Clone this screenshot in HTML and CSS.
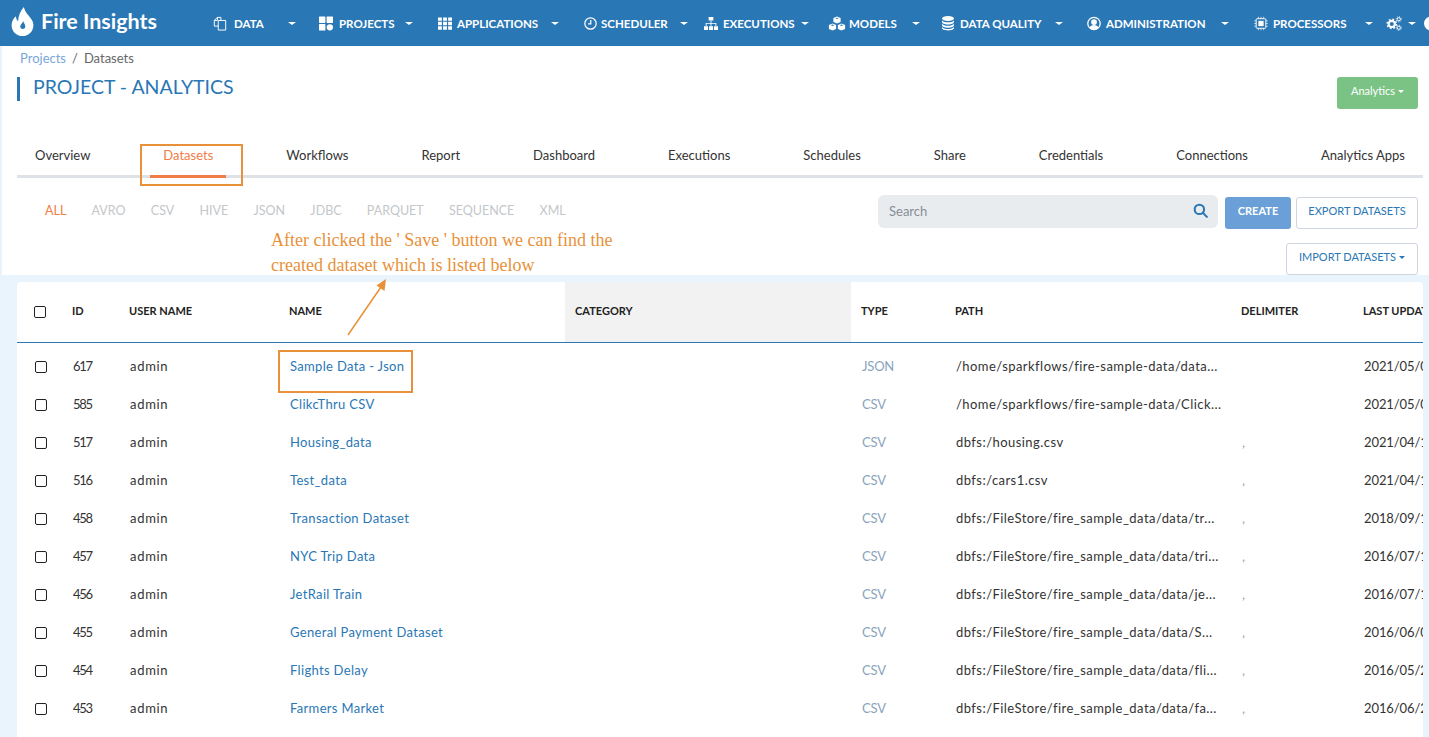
FILE: index.html
```html
<!DOCTYPE html>
<html lang="en">
<head>
    <meta charset="UTF-8">
    <meta name="viewport" content="width=device-width, initial-scale=1.0">
    <title>Fire Insights - Datasets</title>
    <link rel="stylesheet" href="styles.css">
</head>
<body>

<header class="navbar">
    <a class="brand" href="#">
        <svg class="brand-icon" viewBox="0 0 24 32"><path fill-rule="evenodd" d="M13.500 0c1 4.500 3 6.800 5.600 10C21.800 13.200 24 16 24 20c0 6.800-5.300 12-12 12S0 26.800 0 20c0-4 1.800-7.200 4.800-9.800 0 2.400.7 4.200 2.400 5.400C7.300 9.800 9.800 4.200 13.500 0zM12.800 15.500c-.4 1.600-1.400 2.500-2.200 3.500-.7.8-1.100 1.700-1.100 2.600 0 1.600 1.200 2.800 2.800 2.800s2.800-1.200 2.800-2.800c0-2.400-1.700-3.600-2.300-6.100z"/></svg>
        <span>Fire Insights</span>
    </a>
    <nav class="nav-items">
        <a class="nav-item" href="#">
            <svg class="nav-icon" viewBox="0 0 16 16"><g fill="none" stroke="#fff" stroke-width="1.100"><path d="M6 4.500h8.500v11H6z"/><path d="M6 11H1.500V4.500L5 1h4v3.500"/><path d="M5 1v3.500H1.500"/></g></svg>
            <span>DATA</span><i class="caret"></i>
        </a>
        <a class="nav-item" href="#">
            <svg class="nav-icon" viewBox="0 0 16 16"><rect x="0" y="0" width="7.300" height="7.300" rx=".6"/><rect x="8.700" y="0" width="7.300" height="7.300" rx=".6"/><rect x="0" y="8.700" width="7.300" height="7.300" rx=".6"/><circle cx="12.400" cy="12.400" r="3.600"/></svg>
            <span>PROJECTS</span><i class="caret"></i>
        </a>
        <a class="nav-item" href="#">
            <svg class="nav-icon" viewBox="0 0 16 16"><path d="M0 1h4.400v3.900H0zM5.800 1h4.400v3.900H5.800zM11.600 1H16v3.900h-4.400zM0 6.100h4.400V10H0zM5.800 6.100h4.400V10H5.800zM11.600 6.100H16V10h-4.400zM0 11.200h4.400v3.900H0zM5.800 11.200h4.400v3.900H5.800zM11.600 11.200H16v3.900h-4.400z"/></svg>
            <span>APPLICATIONS</span><i class="caret"></i>
        </a>
        <a class="nav-item" href="#">
            <svg class="nav-icon" viewBox="0 0 16 16"><g fill="none" stroke="#fff" stroke-width="1.500"><circle cx="8" cy="8" r="7"/><path d="M8.300 3.800v4.600H5"/></g></svg>
            <span>SCHEDULER</span><i class="caret"></i>
        </a>
        <a class="nav-item" href="#">
            <svg class="nav-icon" viewBox="0 0 16 16"><path d="M5.300 .5h5.400v4H5.300zM0 11h4.600v4.500H0zM5.700 11h4.600v4.500H5.700zM11.400 11H16v4.500h-4.600z"/><path d="M7.500 4.500h1v2.800h5.600V11h-1V8.300H8.500V11h-1V8.300H2.900V11h-1V7.300h5.600z"/></svg>
            <span>EXECUTIONS</span><i class="caret"></i>
        </a>
        <a class="nav-item" href="#">
            <svg class="nav-icon nav-icon-wide" viewBox="0 0 20 16"><path d="M10 .3l4 1.700v4.300L10 8 6 6.300V2zM10 1.500L8 2.300l2 .8 2-.8z"/><path d="M5 8l4 1.700V14l-4 1.700L1 14V9.700zM5 9.200l-2 .8 2 .8 2-.8z"/><path d="M15 8l4 1.700V14l-4 1.700-4-1.700V9.700zM15 9.200l-2 .8 2 .8 2-.8z"/></svg>
            <span>MODELS</span><i class="caret"></i>
        </a>
        <a class="nav-item" href="#">
            <svg class="nav-icon" viewBox="0 0 16 17"><ellipse cx="8" cy="2.800" rx="6.800" ry="2.800"/><path d="M1.200 5c1 1.500 3.800 2.200 6.800 2.200s5.800-.7 6.800-2.200v1.800C14.800 8.400 11.800 9.600 8 9.600S1.200 8.400 1.200 6.800z"/><path d="M1.200 8.700C2.200 10.200 5 11 8 11s5.800-.8 6.800-2.300v1.900c0 1.600-3 2.800-6.800 2.800s-6.800-1.200-6.800-2.800z"/><path d="M1.200 12.400c1 1.500 3.800 2.300 6.800 2.300s5.800-.8 6.800-2.300V14c0 1.300-3 2.400-6.800 2.400S1.200 15.300 1.200 14z"/></svg>
            <span>DATA QUALITY</span><i class="caret"></i>
        </a>
        <a class="nav-item" href="#">
            <svg class="nav-icon" viewBox="0 0 16 16"><circle cx="8" cy="8" r="7.100" fill="none" stroke="#fff" stroke-width="1.500"/><circle cx="8" cy="6.300" r="3.300"/><path d="M2.800 12.600c.8-2 2.800-3 5.200-3s4.400 1 5.200 3C12 14.100 10.200 15 8 15s-4-.9-5.200-2.400z"/></svg>
            <span>ADMINISTRATION</span><i class="caret"></i>
        </a>
        <a class="nav-item" href="#">
            <svg class="nav-icon" viewBox="0 0 16 16"><g fill="none" stroke="#fff"><rect x="2.500" y="2.500" width="11" height="11" rx="1" stroke-width="1.100"/><path d="M5 .3v2M8 .3v2M11 .3v2M5 13.700v2M8 13.700v2M11 13.700v2M.3 5h2M.3 8h2M.3 11h2M13.700 5h2M13.700 8h2M13.700 11h2" stroke-width=".8"/></g><rect x="5" y="5" width="6" height="6"/></svg>
            <span>PROCESSORS</span><i class="caret"></i>
        </a>
        <a class="nav-item nav-item-gear" href="#">
            <svg class="nav-icon nav-icon-gear" viewBox="0 0 18 16"><g fill="none" stroke="#fff"><circle cx="6.500" cy="8.500" r="3.500" stroke-width="2.400"/><circle cx="6.500" cy="8.500" r="5.300" stroke-width="1.500" stroke-dasharray="2 2.160"/><circle cx="14.400" cy="3.200" r="1.800" stroke-width="1.100"/><circle cx="14.400" cy="12.800" r="1.800" stroke-width="1.100"/><circle cx="14.400" cy="3.200" r="2.900" stroke-width=".9" stroke-dasharray="1.100 1.180"/><circle cx="14.400" cy="12.800" r="2.900" stroke-width=".9" stroke-dasharray="1.100 1.180"/></g></svg>
            <i class="caret"></i>
        </a>
        <a class="nav-item" href="#">
            <svg class="nav-icon" viewBox="0 0 16 16"><path d="M8 0a8 8 0 1 0 8 8H8z"/><path d="M9.500 0v6.500H16A8 8 0 0 0 9.500 0z"/></svg>
        </a>
    </nav>
</header>

<main class="panel">
    <div class="breadcrumb"><a href="#">Projects</a><span class="sep">/</span><span>Datasets</span></div>

    <div class="title-row">
        <h1 class="page-title">PROJECT - ANALYTICS</h1>
        <button class="btn btn-green">Analytics<i class="caret"></i></button>
    </div>

    <div class="tabs">
        <a href="#">Overview</a>
        <a href="#" class="active">Datasets</a>
        <a href="#">Workflows</a>
        <a href="#">Report</a>
        <a href="#">Dashboard</a>
        <a href="#">Executions</a>
        <a href="#">Schedules</a>
        <a href="#">Share</a>
        <a href="#">Credentials</a>
        <a href="#">Connections</a>
        <a href="#">Analytics Apps</a>
    </div>

    <div class="toolbar">
        <div class="filters">
            <a href="#" class="active">ALL</a>
            <a href="#">AVRO</a>
            <a href="#">CSV</a>
            <a href="#">HIVE</a>
            <a href="#">JSON</a>
            <a href="#">JDBC</a>
            <a href="#">PARQUET</a>
            <a href="#">SEQUENCE</a>
            <a href="#">XML</a>
        </div>
        <div class="actions">
            <div class="actions-row">
                <div class="search">
                    <span>Search</span>
                    <svg viewBox="0 0 16 16" fill="none" stroke="#2a77b5" stroke-width="2.200"><circle cx="6.800" cy="6.800" r="5"/><path d="M10.500 10.500l4.300 4.300" stroke-linecap="round"/></svg>
                </div>
                <button class="btn btn-blue">CREATE</button>
                <button class="btn btn-outline">EXPORT DATASETS</button>
            </div>
            <button class="btn btn-outline btn-import">IMPORT DATASETS<i class="caret"></i></button>
        </div>
    </div>
</main>

<section class="card">
    <table class="data-table">
        <colgroup>
            <col class="col-check"><col class="col-id"><col class="col-user"><col class="col-name"><col class="col-cat"><col class="col-type"><col class="col-path"><col class="col-delim"><col class="col-date">
        </colgroup>
        <thead>
            <tr>
                <th><input type="checkbox" class="check"></th>
                <th>ID</th>
                <th>USER NAME</th>
                <th>NAME</th>
                <th class="sorted">CATEGORY</th>
                <th>TYPE</th>
                <th>PATH</th>
                <th>DELIMITER</th>
                <th>LAST UPDATED</th>
            </tr>
        </thead>
        <tbody>
            <tr><td><input type="checkbox" class="check"></td><td class="id">617</td><td class="user">admin</td><td><a href="#">Sample Data - Json</a></td><td></td><td class="type">JSON</td><td class="path">/home/sparkflows/fire-sample-data/data...</td><td class="delim"></td><td class="date">2021/05/03</td></tr>
            <tr><td><input type="checkbox" class="check"></td><td class="id">585</td><td class="user">admin</td><td><a href="#">ClikcThru CSV</a></td><td></td><td class="type">CSV</td><td class="path">/home/sparkflows/fire-sample-data/Click...</td><td class="delim"></td><td class="date">2021/05/03</td></tr>
            <tr><td><input type="checkbox" class="check"></td><td class="id">517</td><td class="user">admin</td><td><a href="#">Housing_data</a></td><td></td><td class="type">CSV</td><td class="path">dbfs:/housing.csv</td><td class="delim">,</td><td class="date">2021/04/16</td></tr>
            <tr><td><input type="checkbox" class="check"></td><td class="id">516</td><td class="user">admin</td><td><a href="#">Test_data</a></td><td></td><td class="type">CSV</td><td class="path">dbfs:/cars1.csv</td><td class="delim">,</td><td class="date">2021/04/16</td></tr>
            <tr><td><input type="checkbox" class="check"></td><td class="id">458</td><td class="user">admin</td><td><a href="#">Transaction Dataset</a></td><td></td><td class="type">CSV</td><td class="path">dbfs:/FileStore/fire_sample_data/data/tr...</td><td class="delim">,</td><td class="date">2018/09/11</td></tr>
            <tr><td><input type="checkbox" class="check"></td><td class="id">457</td><td class="user">admin</td><td><a href="#">NYC Trip Data</a></td><td></td><td class="type">CSV</td><td class="path">dbfs:/FileStore/fire_sample_data/data/tri...</td><td class="delim">,</td><td class="date">2016/07/16</td></tr>
            <tr><td><input type="checkbox" class="check"></td><td class="id">456</td><td class="user">admin</td><td><a href="#">JetRail Train</a></td><td></td><td class="type">CSV</td><td class="path">dbfs:/FileStore/fire_sample_data/data/je...</td><td class="delim">,</td><td class="date">2016/07/13</td></tr>
            <tr><td><input type="checkbox" class="check"></td><td class="id">455</td><td class="user">admin</td><td><a href="#">General Payment Dataset</a></td><td></td><td class="type">CSV</td><td class="path">dbfs:/FileStore/fire_sample_data/data/S...</td><td class="delim">,</td><td class="date">2016/06/06</td></tr>
            <tr><td><input type="checkbox" class="check"></td><td class="id">454</td><td class="user">admin</td><td><a href="#">Flights Delay</a></td><td></td><td class="type">CSV</td><td class="path">dbfs:/FileStore/fire_sample_data/data/fli...</td><td class="delim">,</td><td class="date">2016/05/28</td></tr>
            <tr><td><input type="checkbox" class="check"></td><td class="id">453</td><td class="user">admin</td><td><a href="#">Farmers Market</a></td><td></td><td class="type">CSV</td><td class="path">dbfs:/FileStore/fire_sample_data/data/fa...</td><td class="delim">,</td><td class="date">2016/06/21</td></tr>
        </tbody>
    </table>
</section>

<!-- annotations drawn on top of the screenshot -->
<div class="mark mark-tab"></div>
<div class="mark mark-row"></div>
<p class="note">After clicked the ' Save ' button we can find the<br>created dataset which is listed below</p>
<svg class="note-arrow" viewBox="0 0 50 64" fill="none"><path d="M2 62L37 11" stroke="#e8913a" stroke-width="1.500"/><path d="M40 6l-1.500 12-8-5.500z" fill="#e8913a"/></svg>

</body>
</html>
```

FILE: styles.css
```css
html, body {
    height: 100%;
}

body {
    font-family: 'Lato', 'Open Sans', sans-serif;
    margin: 0;
    padding: 0;
    background-color: #eaf4fd;
    color: #333;
    overflow: hidden;
    position: relative;
}

a {
    text-decoration: none;
    color: inherit;
}

.caret {
    display: inline-block;
    width: 0;
    height: 0;
    border-top: 4px solid currentColor;
    border-left: 4px solid transparent;
    border-right: 4px solid transparent;
}

/* navbar */
.navbar {
    display: flex;
    align-items: center;
    height: 46px;
    background-color: #2a77b5;
    color: #fff;
    overflow: hidden;
}

.brand {
    display: flex;
    align-items: center;
    gap: 7px;
    width: 213px;
    flex: none;
    padding-left: 11px;
    box-sizing: border-box;
    font-size: 21.500px;
    font-weight: 700;
}

.brand span {
    margin-top: -5px;
}

.brand-icon {
    width: 23px;
    height: 29px;
    fill: #fff;
    margin-top: -3px;
}

.nav-items {
    display: grid;
    grid-template-columns: 106px 119px 146px 120px 124px 113px 146px 167px 132px 38px 20px;
    flex: none;
}

.nav-item {
    display: flex;
    align-items: center;
    gap: 5px;
    font-size: 11.500px;
    font-weight: 700;
    white-space: nowrap;
}

.nav-item .caret {
    margin-left: auto;
    margin-right: 25px;
    border-top-width: 3.500px;
}

.nav-item:nth-child(1) { gap: 7px; }
.nav-item:nth-child(1) .caret { margin-right: 23px; }
.nav-item:nth-child(2) { gap: 6px; }
.nav-item:nth-child(4) { gap: 4px; }
.nav-item:nth-child(4) .nav-icon { width: 13px; height: 13px; }
.nav-item:nth-child(4) .caret { margin-right: 16px; }
.nav-item:nth-child(5) .caret { margin-right: 19px; }
.nav-item:nth-child(6) { gap: 3px; }
.nav-item:nth-child(6) .caret { margin-right: 21px; }
.nav-item:nth-child(7) .caret { margin-right: 24px; }
.nav-item:nth-child(9) .caret { margin-right: 13px; }

.nav-item-gear {
    gap: 3px;
}

.nav-item.nav-item-gear .caret {
    margin-left: 3px;
    margin-right: 0;
}

.nav-icon {
    width: 14px;
    height: 15px;
    fill: #fff;
    flex: none;
}

.nav-icon-wide {
    width: 18px;
}

.nav-icon-gear {
    width: 16px;
    height: 15px;
}

/* top panel */
.panel {
    margin-left: 2px;
    height: 229px;
    box-sizing: border-box;
    padding: 4px 6px 0 15px;
    background-color: #fff;
}

.breadcrumb {
    display: flex;
    padding-left: 3px;
    height: 16px;
    line-height: 16px;
    font-size: 13px;
    color: #666;
}

.breadcrumb a {
    color: #79a7d8;
}

.breadcrumb .sep {
    margin: 0 6px;
}

.title-row {
    display: flex;
    justify-content: space-between;
    align-items: flex-start;
    margin-top: 11px;
    padding-right: 5px;
}

.page-title {
    margin: 0;
    height: 24px;
    line-height: 20px;
    padding-left: 13px;
    border-left: 3px solid #2a77b5;
    font-size: 19.500px;
    font-weight: 400;
    color: #2a77b5;
}

.btn {
    font-family: inherit;
    box-sizing: border-box;
    height: 32px;
    border-radius: 3px;
    border: none;
    font-size: 11px;
    cursor: pointer;
    padding: 0 0 6px;
}

.btn .caret {
    margin-left: 3px;
    border-top-width: 3px;
    border-left-width: 3.500px;
    border-right-width: 3.500px;
    vertical-align: middle;
}

.btn-green {
    width: 81px;
    background-color: #7ac384;
    color: #fff;
}

.btn-blue {
    width: 66px;
    background-color: #6a9fd8;
    color: #fff;
    font-weight: 700;
}

.btn-outline {
    background-color: #fff;
    border: 1px solid #ced4e0;
    color: #2a77b5;
}

.btn-import {
    width: 132px;
    margin-top: 14px;
}

/* tabs */
.tabs {
    display: flex;
    justify-content: space-between;
    height: 69px;
    box-sizing: border-box;
    align-items: flex-end;
    padding: 0 18px;
    border-bottom: 3px solid #dee2e6;
    font-size: 13px;
}

.tabs a {
    position: relative;
    height: 28px;
    line-height: 16px;
}

.tabs a.active {
    color: #ef7d45;
}

.tabs a.active::after {
    content: "";
    position: absolute;
    left: -13px;
    right: -13px;
    bottom: -3px;
    height: 3px;
    background-color: #ef7d45;
}

/* filters and actions */
.toolbar {
    display: flex;
    justify-content: space-between;
    padding-right: 5px;
}

.filters {
    display: flex;
    gap: 25.250px;
    padding: 25px 0 0 28px;
    line-height: 16px;
    font-size: 12.500px;
    color: #c4c7ca;
}

.filters a.active {
    color: #ef7d45;
}

.actions {
    display: flex;
    flex-direction: column;
    align-items: flex-end;
    padding-top: 17px;
}

.actions-row {
    display: flex;
    align-items: flex-start;
}

.actions-row .btn {
    margin-top: 2px;
}

.actions-row .btn-blue {
    margin-left: 7px;
}

.actions-row .btn-outline {
    margin-left: 5px;
    width: 122px;
}

.search {
    display: flex;
    justify-content: space-between;
    align-items: center;
    width: 340px;
    height: 33px;
    box-sizing: border-box;
    padding: 0 10px 2px 11px;
    background-color: #e9ecef;
    border-radius: 6px;
    font-size: 13px;
    color: #868e96;
}

.search svg {
    width: 15px;
    height: 15px;
}

/* table */
.card {
    margin: 7px 6px 0 17px;
    height: 460px;
    background-color: #fff;
    border-radius: 4px;
    overflow: hidden;
}

.data-table {
    table-layout: fixed;
    border-collapse: separate;
    border-spacing: 0;
    width: 1500px;
    font-size: 13px;
}

.col-check { width: 45px; }
.col-id { width: 57px; }
.col-user { width: 160px; }
.col-name { width: 286px; }
.col-cat { width: 286px; }
.col-type { width: 94px; }
.col-path { width: 286px; }
.col-delim { width: 122px; }
.col-date { width: 164px; }

.data-table th {
    height: 56px;
    padding: 0 0 4px 10px;
    border-bottom: 1px solid #2a77b5;
    text-align: left;
    font-size: 11px;
    font-weight: 700;
    color: #222;
    white-space: nowrap;
}

.data-table th.sorted {
    background-color: #f2f2f2;
}

.data-table td {
    height: 38px;
    padding: 0 0 0 11px;
    white-space: nowrap;
    overflow: hidden;
    letter-spacing: .33px;
}

.data-table tbody tr:first-child td {
    height: 38px;
    padding-top: 4px;
}

.data-table td a {
    color: #2a77b5;
}

.data-table td.id {
    letter-spacing: -1.300px;
}

.data-table td.user {
    letter-spacing: .7px;
}

.data-table td.path {
    letter-spacing: .45px;
}

.data-table td.date {
    letter-spacing: -.1px;
}

.data-table td.type {
    color: #8aa3bd;
    letter-spacing: -.2px;
}

.data-table td.delim {
    color: #8aa3bd;
}

.check {
    appearance: none;
    display: block;
    width: 12px;
    height: 12px;
    margin: 2px 0 0;
    border: 1.500px solid #222;
    border-radius: 2px;
    background-color: #fff;
    box-sizing: border-box;
}

.data-table th .check {
    margin-top: 4px;
}

.data-table th:first-child {
    padding-left: 17px;
}

.data-table td:first-child {
    padding-left: 18px;
}

/* annotations */
.mark {
    position: absolute;
    border: 2px solid #e8913a;
    box-sizing: border-box;
}

.mark-tab {
    left: 140px;
    top: 144px;
    width: 103px;
    height: 42px;
}

.mark-row {
    left: 278px;
    top: 350px;
    width: 135px;
    height: 43px;
}

.note {
    position: absolute;
    left: 271px;
    top: 228px;
    margin: 0;
    font-family: 'Liberation Serif', serif;
    font-size: 18px;
    line-height: 25px;
    color: #e8913a;
    white-space: nowrap;
}

.note-arrow {
    position: absolute;
    left: 346px;
    top: 273px;
    width: 50px;
    height: 64px;
}
```
